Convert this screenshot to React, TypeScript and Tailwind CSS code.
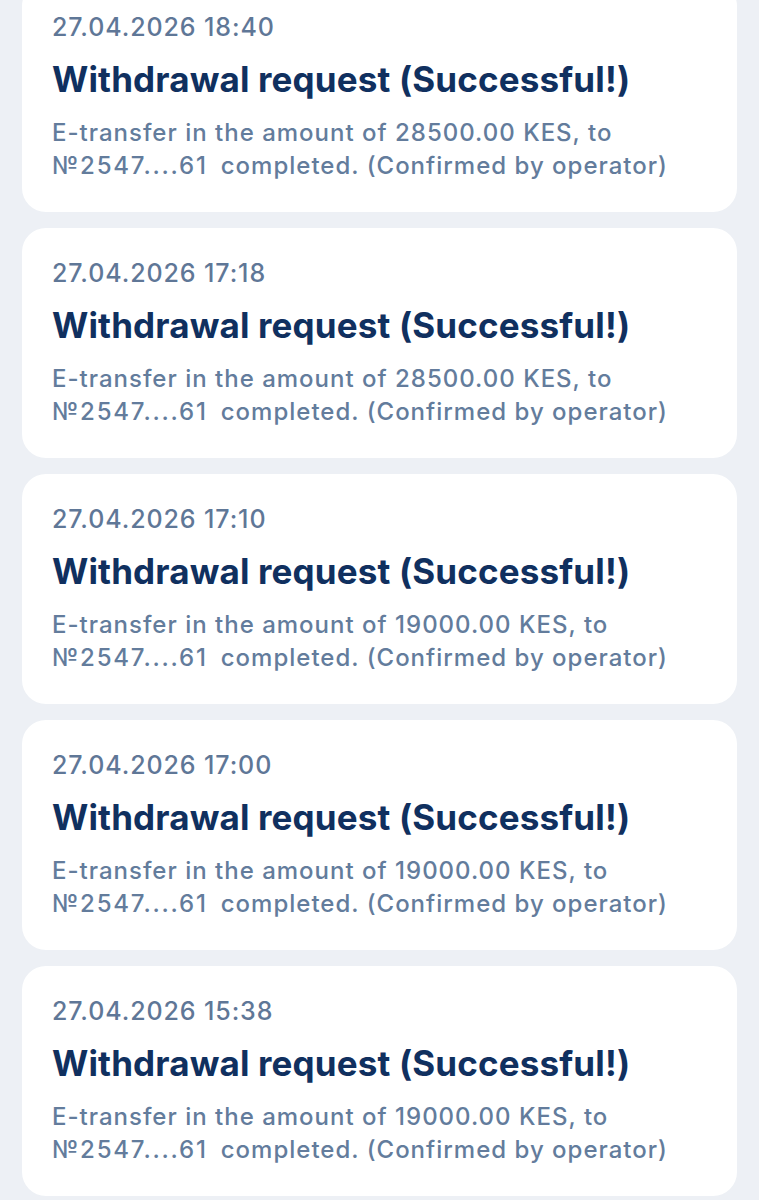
const items = [
  { date: "27.04.2026 18:40", amount: "28500.00" },
  { date: "27.04.2026 17:18", amount: "28500.00" },
  { date: "27.04.2026 17:10", amount: "19000.00" },
  { date: "27.04.2026 17:00", amount: "19000.00" },
  { date: "27.04.2026 15:38", amount: "19000.00" },
];

export default function App() {
  return (
    <div
      className="min-h-[1200px] bg-[#edf0f5] px-[22px] pb-10 overflow-hidden"
      style={{ fontFamily: "Inter, 'Noto Sans', sans-serif" }}
    >
      <div className="-mt-[18px] flex flex-col gap-4">
        {items.map((item, i) => (
          <div key={i} className="rounded-[24px] bg-white pl-[30px] pr-4 pt-[30px] pb-[30px]">
            <div className="text-[25px] leading-[30px] font-medium text-[#5f7797] tracking-[0.9px]">
              {item.date}
            </div>
            <div className="mt-[17px] text-[35px] leading-[40px] font-bold text-[#10305f] tracking-[0.15px] whitespace-nowrap">
              Withdrawal request (Successful!)
            </div>
            <div className="mt-[17px] text-[24px] leading-[33px] font-medium text-[#637c9c] tracking-[1px] whitespace-nowrap">
              <div>E-transfer in the amount of {item.amount} KES, to</div>
              <div>
                <span className="tracking-[1.8px]">№2547....61</span>
                <span className="ml-[13px]">completed. (Confirmed by operator)</span>
              </div>
            </div>
          </div>
        ))}
      </div>
    </div>
  );
}
